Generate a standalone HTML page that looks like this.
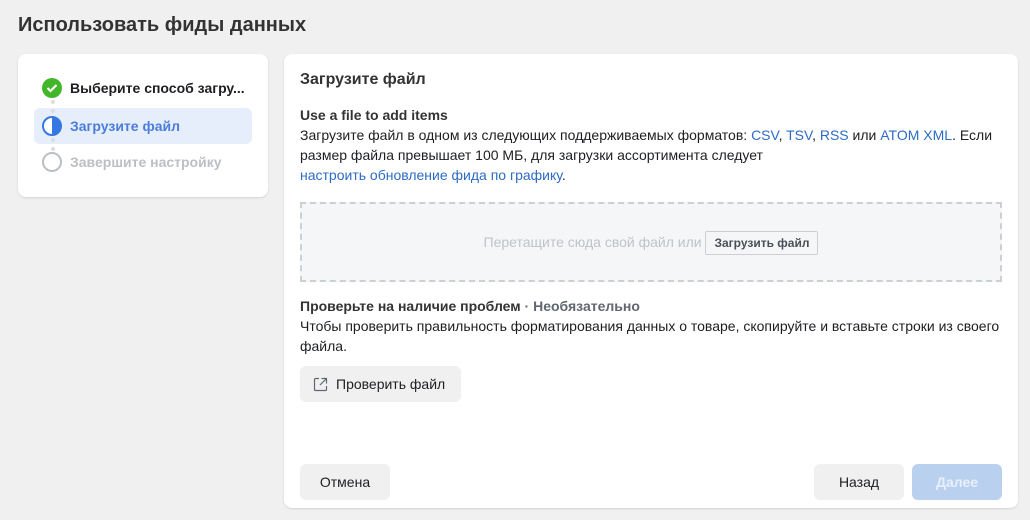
<!DOCTYPE html>
<html><head><meta charset="utf-8"><style>
*{box-sizing:border-box;margin:0;padding:0}
body{width:1030px;height:520px;background:#f0f0f0;font-family:"Liberation Sans",Arial,sans-serif;color:#1c1e21;position:relative;overflow:hidden}
h1{position:absolute;left:18px;top:14px;font-size:20px;font-weight:bold;color:#333}
.card{position:absolute;background:#fff;border-radius:8px;box-shadow:0 1px 2px rgba(0,0,0,.12)}
.step{position:absolute;left:16px;width:218px;height:36px;font-size:14px;font-weight:bold;line-height:36px;padding-left:36px;border-radius:6px}
.ic{position:absolute;left:8px;top:8px;width:20px;height:20px;border-radius:50%}
.ic svg{display:block}
.dot{position:absolute;left:33px;width:4px;height:4px;border-radius:50%;background:#ddd;z-index:2}
.p{position:absolute;left:16px;font-size:14px;line-height:20px;color:#1c1e21}
a{color:#2d6bc4;text-decoration:none}
.btn{position:absolute;height:36px;border-radius:6px;background:#f0f0f0;font-size:14px;line-height:36px;text-align:center;color:#1c1e21}
</style></head><body>
<h1>Использовать фиды данных</h1>
<div class="card" style="left:18px;top:54px;width:250px;height:143px">
  <div class="step" style="top:16px;color:#1c1e21"><div class="ic" style="background:#42b72a"><svg width="20" height="20" viewBox="0 0 20 20"><path d="M5.5 10l3 3 6-6" fill="none" stroke="#fff" stroke-width="2.2"/></svg></div>Выберите способ загру...</div>
  <div class="dot" style="top:46px"></div>
  <div class="dot" style="top:55px"></div>
  <div class="step" style="top:54px;background:#e7eefb;color:#4a7ddb"><div class="ic" style="border:2px solid #3578e5;background:linear-gradient(90deg,#fff 50%,#3578e5 50%)"></div>Загрузите файл</div>
  <div class="dot" style="top:84px"></div>
  <div class="dot" style="top:93px"></div>
  <div class="step" style="top:90px;color:#bcc0c4"><div class="ic" style="border:2px solid #bcc0c4"></div>Завершите настройку</div>
</div>
<div class="card" style="left:284px;top:54px;width:734px;height:454px">
  <div class="p" style="top:16px;font-size:16px;font-weight:bold;color:#333">Загрузите файл</div>
  <div class="p" style="top:51px;font-weight:bold;color:#333">Use a file to add items</div>
  <div class="p" style="top:71px;width:710px">Загрузите файл в одном из следующих поддерживаемых форматов: <a>CSV</a>, <a>TSV</a>, <a>RSS</a> или <a>ATOM XML</a>. Если размер файла превышает 100 МБ, для загрузки ассортимента следует<br><a>настроить обновление фида по графику</a>.</div>
  <div style="position:absolute;left:16px;top:148px;width:702px;height:80px;border:2px dashed #ccd0d5;background:#f5f6f7;text-align:center;font-size:14px;color:#bec3c9;line-height:76px">Перетащите сюда свой файл или <span style="display:inline-block;border:1px solid #ccd0d5;background:#f5f6f7;border-radius:2px;height:24px;line-height:22px;padding:0 8px;font-size:12px;font-weight:bold;color:#4b4f56;vertical-align:middle">Загрузить файл</span></div>
  <div class="p" style="top:242px"><b style="color:#333">Проверьте на наличие проблем</b> <span style="color:#606770;font-weight:bold">· Необязательно</span></div>
  <div class="p" style="top:262px;width:710px">Чтобы проверить правильность форматирования данных о товаре, скопируйте и вставьте строки из своего файла.</div>
  <div class="btn" style="left:16px;top:312px;width:161px;text-align:left;padding-left:36px"><svg style="position:absolute;left:13px;top:11px" width="15" height="15" viewBox="0 0 15 15"><path d="M6 1.5H2.5a1 1 0 0 0-1 1v10a1 1 0 0 0 1 1h10a1 1 0 0 0 1-1V9M8.5 1.5h5v5M13.5 1.5L7 8" fill="none" stroke="#606770" stroke-width="1.2"/></svg>Проверить файл</div>
  <div class="btn" style="left:16px;top:410px;width:90px">Отмена</div>
  <div class="btn" style="left:530px;top:410px;width:90px">Назад</div>
  <div class="btn" style="left:628px;top:410px;width:90px;background:#b9d0ef;color:#e8f0fb;font-weight:bold">Далее</div>
</div>
</body></html>
